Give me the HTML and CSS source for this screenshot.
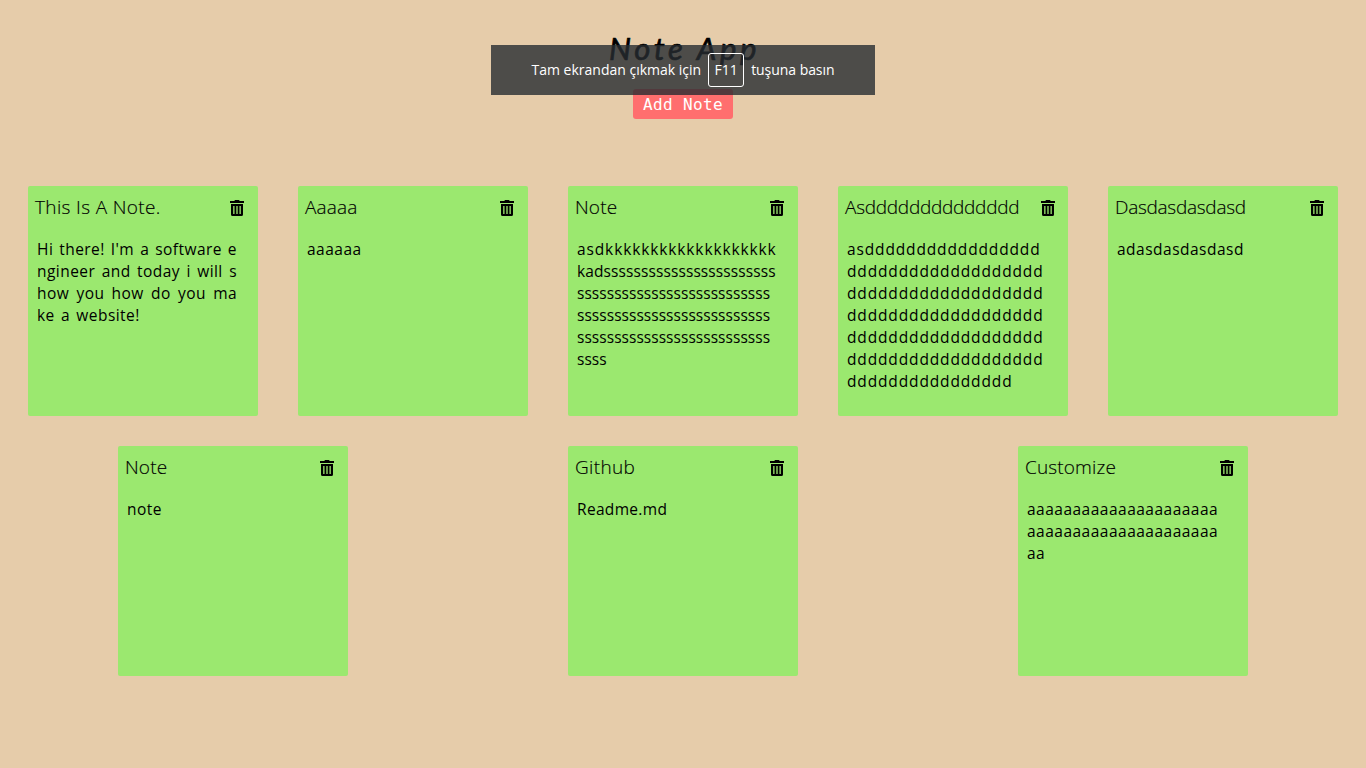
FILE: index.html
```html
<!DOCTYPE html>
<html lang="tr">
<head>
<meta charset="utf-8">
<title>Note App</title>
<link rel="stylesheet" href="styles.css">
</head>
<body>
<svg class="defs" width="0" height="0"><symbol id="trash" viewBox="0 0 14 16"><path fill-rule="evenodd" d="M0 1h4.3L5 0h4l.7 1H14v2H0zM1 4h12v10.5a1.5 1.5 0 0 1-1.500 1.500h-9A1.500 1.500 0 0 1 1 14.500zM3.200 6v8h1.300V6zM6.350 6v8h1.300V6zM9.500 6v8h1.300V6z"/></symbol></svg>
<header class="header">
  <h1 class="title">Note App</h1>
  <button class="add">Add Note</button>
</header>
<main class="notes">
  <article class="note"><div class="note-head"><h2 class="t-this">This Is A Note.</h2><svg class="trash"><use href="#trash"/></svg></div><div class="text"><span class="line full">Hi there! I'm a software e</span><span class="line full">ngineer and today i will s</span><span class="line full">how you how do you ma</span><span class="line last">ke a website!</span></div></article>
  <article class="note"><div class="note-head"><h2 class="t-wide">Aaaaa</h2><svg class="trash"><use href="#trash"/></svg></div><div class="text"><span class="line a">aaaaaa</span></div></article>
  <article class="note"><div class="note-head"><h2 class="t-wide">Note</h2><svg class="trash"><use href="#trash"/></svg></div><div class="text"><span class="line k">asdkkkkkkkkkkkkkkkkkkk</span><span class="line ks">kadsssssssssssssssssssssss</span><span class="line s">ssssssssssssssssssssssssss</span><span class="line s">ssssssssssssssssssssssssss</span><span class="line s">ssssssssssssssssssssssssss</span><span class="line s">ssss</span></div></article>
  <article class="note"><div class="note-head long"><h2 class="t-d">Asdddddddddddddd</h2><svg class="trash"><use href="#trash"/></svg></div><div class="text"><span class="line d">asddddddddddddddddd</span><span class="line d">ddddddddddddddddddd</span><span class="line d">ddddddddddddddddddd</span><span class="line d">ddddddddddddddddddd</span><span class="line d">ddddddddddddddddddd</span><span class="line d">ddddddddddddddddddd</span><span class="line d">dddddddddddddddd</span></div></article>
  <article class="note"><div class="note-head"><h2 class="t-d">Dasdasdasdasd</h2><svg class="trash"><use href="#trash"/></svg></div><div class="text"><span class="line a">adasdasdasdasd</span></div></article>
  <article class="note"><div class="note-head"><h2 class="t-wide">Note</h2><svg class="trash"><use href="#trash"/></svg></div><div class="text"><span class="line a">note</span></div></article>
  <article class="note"><div class="note-head"><h2 class="t-this">Github</h2><svg class="trash"><use href="#trash"/></svg></div><div class="text"><span class="line">Readme.md</span></div></article>
  <article class="note"><div class="note-head"><h2 class="t-wide">Customize</h2><svg class="trash"><use href="#trash"/></svg></div><div class="text"><span class="line a">aaaaaaaaaaaaaaaaaaaaa</span><span class="line a">aaaaaaaaaaaaaaaaaaaaa</span><span class="line a">aa</span></div></article>
</main>
<div class="toast"><span class="msg">Tam ekrandan çıkmak için</span><kbd>F11</kbd><span class="msg end">tuşuna basın</span></div>
</body>
</html>
```
FILE: styles.css
```css
* { box-sizing: border-box; }
body { margin: 0; padding: 0 8px; height: 768px; overflow: hidden; background: #e6ccaa; color: #000; font-family: "Open Sans", sans-serif; }
.defs { position: absolute; }
.header { display: flex; flex-direction: column; align-items: center; height: 171px; padding-top: 24px; }
.title { margin: 0 0 17px; padding-left: 3px; height: 48px; font: italic 400 31px/48px Lato, cursive; letter-spacing: 3.7px; white-space: nowrap; -webkit-text-stroke: .7px #000; }
.add { width: 100px; height: 30px; padding: 1px 0 0; border: 0; border-radius: 3px; background: #ff6e6e; color: #fff; font: 16px/29px "DejaVu Sans Mono", monospace; letter-spacing: .37px; }
.notes { display: flex; flex-wrap: wrap; justify-content: space-around; }
.note { width: 230px; height: 230px; margin: 15px 0; padding: 6px 14px 0 7px; border-radius: 2px; background: #9be86f; }
.note-head { display: flex; align-items: center; justify-content: space-between; height: 30px; }
.note-head.long { margin-right: -1px; }
.note-head h2 { margin: 0; font-size: 19px; line-height: 30px; font-weight: 300; white-space: nowrap; -webkit-text-stroke: .15px #000; }
.note-head .t-this { letter-spacing: .35px; }
.note-head .t-wide { letter-spacing: .15px; }
.note-head .t-d { letter-spacing: -.27px; }
.trash { width: 14px; height: 16px; margin-top: 2px; }
.text { width: 200px; margin: 16px 0 0 2px; font-size: 15.5px; line-height: 22px; }
.line { display: block; white-space: nowrap; letter-spacing: .32px; }
.full { text-align-last: justify; letter-spacing: .45px; }
.last { letter-spacing: .45px; word-spacing: 1.8px; }
.a { letter-spacing: .49px; }
.k { letter-spacing: .88px; }
.ks { letter-spacing: .1px; }
.s { letter-spacing: .04px; }
.d { letter-spacing: .86px; }
.toast { position: absolute; left: 491px; top: 45px; width: 384px; height: 50px; display: flex; align-items: center; justify-content: center; gap: 7px; background: rgba(39, 44, 49, .8); color: #fff; font: 14px/20px "Open Sans", sans-serif; white-space: nowrap; }
.toast .end { letter-spacing: -.05px; }
.toast kbd { width: 36px; height: 34px; border: 1px solid #fff; border-radius: 3px; font: 14px/32px "Open Sans", sans-serif; text-align: center; }
```
